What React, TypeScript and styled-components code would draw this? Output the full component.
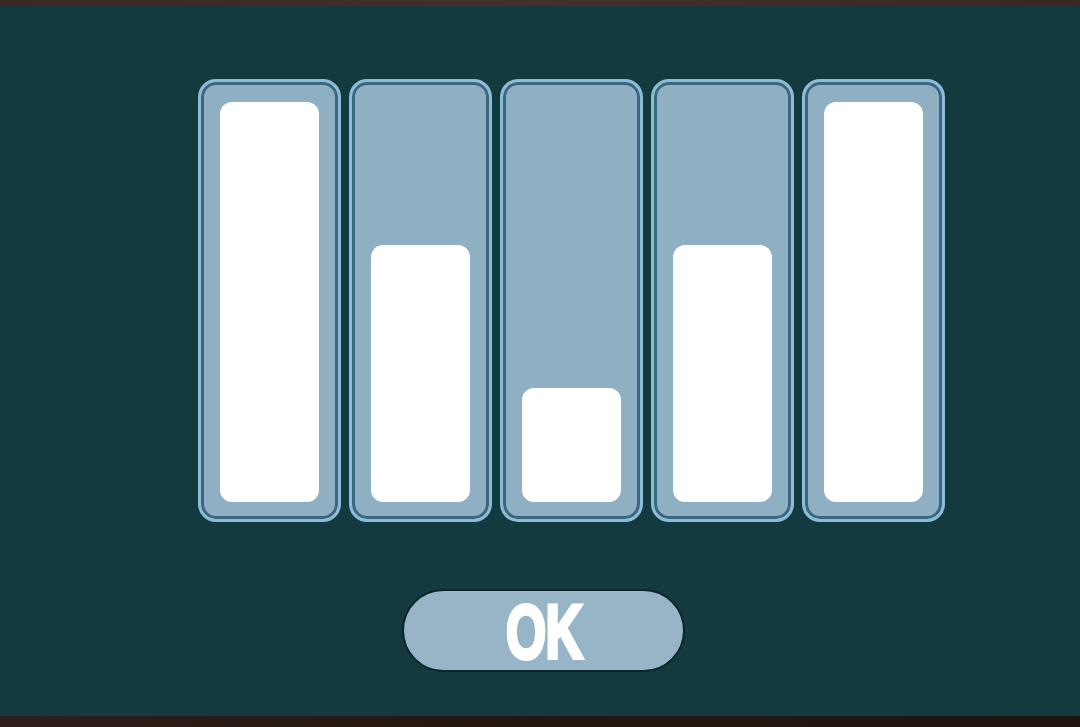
import React from "react";
import styled, { createGlobalStyle } from "styled-components";

const GlobalStyle = createGlobalStyle`
  html, body {
    margin: 0;
    padding: 0;
    background: #133b3f;
  }
  * {
    box-sizing: border-box;
  }
`;

const Frame = styled.div`
  width: 1080px;
  height: 727px;
  display: flex;
  flex-direction: column;
  overflow: hidden;
`;

const TopStrip = styled.div`
  height: 6px;
  background: linear-gradient(90deg, #3a2a22, #43302a 50%, #3a2923);
`;

const BottomStrip = styled.div`
  height: 11px;
  background: linear-gradient(90deg, #2e1e1a, #24170f 50%, #1f1410);
`;

const Panel = styled.div`
  flex: 1;
  background: #133b3f;
  display: flex;
  flex-direction: column;
  padding-top: 73px;
`;

const BarRow = styled.div`
  display: flex;
  gap: 8px;
  padding-left: 198px;
`;

const Bar = styled.div`
  width: 143px;
  height: 443px;
  border: 3px solid #8cbcd6;
  border-radius: 18px;
  background: #8fafc2;
  box-shadow: inset 0 0 0 3px #3c6580;
  padding: 20px 19px 17px;
  display: flex;
  flex-direction: column;
  justify-content: flex-end;
`;

const Fill = styled.div`
  width: 100%;
  background: #ffffff;
  border-radius: 12px;
`;

const OkButton = styled.button`
  margin-top: 67px;
  margin-left: 402px;
  width: 283px;
  height: 83px;
  border: 2px solid #0b2528;
  border-radius: 42px;
  background: #97b5c7;
  display: flex;
  align-items: center;
  justify-content: center;
  cursor: pointer;
  padding: 0;
`;

const OkLabel = styled.span`
  display: inline-block;
  color: #ffffff;
  font-family: "Liberation Sans", "DejaVu Sans", sans-serif;
  font-weight: 700;
  font-size: 76px;
  line-height: 1;
  letter-spacing: -1px;
  -webkit-text-stroke: 4px #ffffff;
  transform: scaleX(0.68);
  margin-top: 2px;
`;

const levels = [400, 257, 114, 257, 400];

export default function App() {
  return (
    <>
      <GlobalStyle />
      <Frame>
        <TopStrip />
        <Panel>
          <BarRow>
            {levels.map((h, i) => (
              <Bar key={i}>
                <Fill style={{ height: h }} />
              </Bar>
            ))}
          </BarRow>
          <OkButton type="button">
            <OkLabel>OK</OkLabel>
          </OkButton>
        </Panel>
        <BottomStrip />
      </Frame>
    </>
  );
}
